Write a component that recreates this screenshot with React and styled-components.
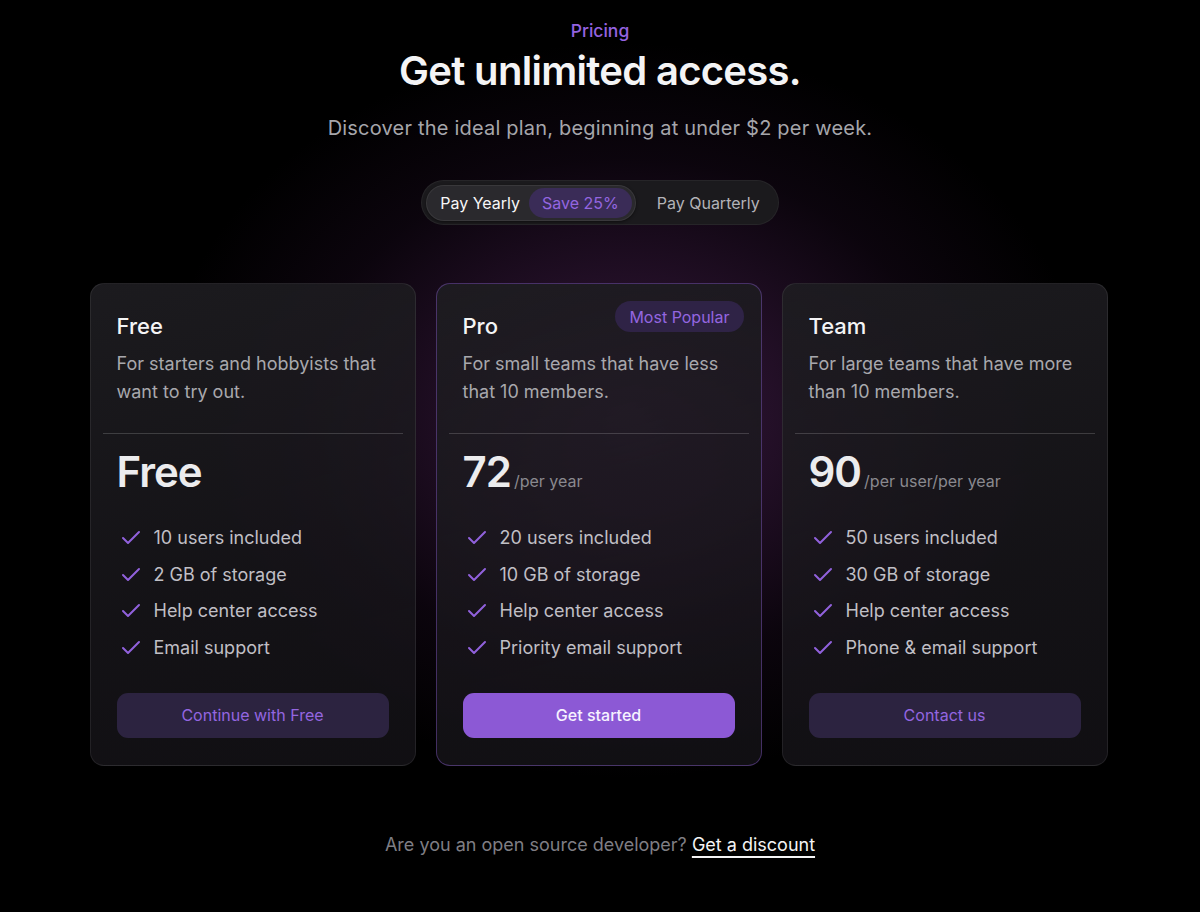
import styled, { createGlobalStyle } from "styled-components";
import { Check } from "lucide-react";

const GlobalStyle = createGlobalStyle`
  html, body {
    margin: 0;
    background: #000;
  }
  body {
    font-family: Inter, "Noto Sans", sans-serif;
    -webkit-font-smoothing: antialiased;
  }
  * {
    box-sizing: border-box;
  }
`;

const Page = styled.div`
  min-height: 912px;
  display: flex;
  flex-direction: column;
  align-items: center;
  padding-top: 19px;
  background: radial-gradient(
      ellipse 580px 460px at 52% 45%,
      rgba(135, 60, 150, 0.42),
      rgba(70, 28, 80, 0.16) 55%,
      transparent 80%
    ),
    #000;
`;

const Eyebrow = styled.div`
  color: #9563e0;
  font-size: 17.5px;
  font-weight: 500;
  line-height: 24px;
`;

const Heading = styled.h1`
  margin: 3px 0 0;
  color: #f4f4f5;
  font-size: 40px;
  font-weight: 600;
  letter-spacing: -0.7px;
  line-height: 50px;
`;

const Lead = styled.p`
  margin: 18px 0 0;
  color: #a6a6ab;
  font-size: 20px;
  letter-spacing: 0.2px;
  line-height: 28px;
`;

const Toggle = styled.div`
  margin-top: 38px;
  display: flex;
  align-items: center;
  height: 45px;
  padding: 4px;
  border-radius: 23px;
  background: #1b1a1d;
  border: 1px solid rgba(255, 255, 255, 0.05);
`;

const ActiveOption = styled.div`
  display: flex;
  align-items: center;
  gap: 9px;
  height: 36px;
  padding: 0 3px 0 13px;
  border-radius: 18px;
  background: #2a292d;
  border: 1px solid rgba(255, 255, 255, 0.07);
  color: #f7f7f8;
  font-size: 16px;
  box-shadow: 0 1px 3px rgba(0, 0, 0, 0.5);
`;

const SaveBadge = styled.span`
  display: flex;
  align-items: center;
  height: 30px;
  padding: 0 13px;
  border-radius: 15px;
  background: #3a2c57;
  color: #9466e0;
  font-size: 16px;
`;

const Option = styled.div`
  padding: 0 14px 0 21px;
  color: #b3b3b8;
  font-size: 16px;
`;

const Grid = styled.div`
  margin-top: 58px;
  margin-right: 3px;
  width: 1018px;
  display: grid;
  grid-template-columns: repeat(3, 1fr);
  gap: 20px;
`;

const Card = styled.div`
  position: relative;
  display: flex;
  flex-direction: column;
  padding: 28px 26px 27px;
  border-radius: 14px;
  border: 1px solid
    ${(p) => (p.$featured ? "rgba(150, 100, 230, 0.38)" : "rgba(255, 255, 255, 0.08)")};
  background: linear-gradient(
    165deg,
    rgba(30, 29, 33, 0.92) 0%,
    rgba(26, 24, 29, 0.76) 60%,
    rgba(22, 20, 25, 0.74) 100%
  );
`;

const Badge = styled.span`
  position: absolute;
  top: 17px;
  right: 17px;
  height: 31px;
  padding: 0 14px;
  display: flex;
  align-items: center;
  border-radius: 16px;
  background: #2f2346;
  color: #9466e0;
  font-size: 16px;
`;

const PlanName = styled.h3`
  margin: 0;
  color: #f4f4f5;
  font-size: 22px;
  font-weight: 500;
  line-height: 28px;
`;

const PlanText = styled.p`
  margin: 10px 0 0;
  color: #a8a8ad;
  font-size: 18px;
  line-height: 28px;
`;

const Divider = styled.hr`
  margin: 27px -14px 0;
  border: none;
  height: 1px;
  background: rgba(255, 255, 255, 0.17);
`;

const PriceRow = styled.div`
  margin-top: 13px;
  display: flex;
  align-items: baseline;
  gap: 3px;
  height: 50px;
`;

const Amount = styled.span`
  color: #ececee;
  font-size: 42px;
  font-weight: 600;
  letter-spacing: -1px;
  line-height: 50px;
`;

const Period = styled.span`
  color: #8a898f;
  font-size: 16px;
`;

const Features = styled.ul`
  list-style: none;
  margin: 27px 0 0;
  padding: 0;
  display: flex;
  flex-direction: column;
  gap: 8.5px;
`;

const Feature = styled.li`
  display: flex;
  align-items: center;
  gap: 11px;
  padding-left: 2px;
  color: #c0bfc5;
  font-size: 18px;
  line-height: 28px;
  svg {
    color: #9161dc;
    flex-shrink: 0;
  }
`;

const ButtonWrap = styled.div`
  margin-top: auto;
  padding-top: 31px;
`;

const Button = styled.button`
  height: 45px;
  width: 100%;
  border: none;
  border-radius: 11px;
  font-family: inherit;
  font-size: 16px;
  font-weight: ${(p) => (p.$primary ? 500 : 400)};
  color: ${(p) => (p.$primary ? "#f6f2ff" : "#9466e0")};
  background: ${(p) => (p.$primary ? "#8c59d5" : "#2c2340")};
  cursor: pointer;
`;

const Footer = styled.p`
  margin: 65px 0 0;
  color: #7f7e84;
  font-size: 18px;
  line-height: 28px;
`;

const Discount = styled.a`
  color: #f4f4f5;
  text-decoration: underline;
  text-decoration-thickness: 1.5px;
  text-underline-offset: 5px;
  cursor: pointer;
`;

const plans = [
  {
    name: "Free",
    text: "For starters and hobbyists that want to try out.",
    amount: "Free",
    features: ["10 users included", "2 GB of storage", "Help center access", "Email support"],
    cta: "Continue with Free",
  },
  {
    name: "Pro",
    text: "For small teams that have less that 10 members.",
    amount: "72",
    period: "/per year",
    featured: true,
    features: ["20 users included", "10 GB of storage", "Help center access", "Priority email support"],
    cta: "Get started",
  },
  {
    name: "Team",
    text: "For large teams that have more than 10 members.",
    amount: "90",
    period: "/per user/per year",
    features: ["50 users included", "30 GB of storage", "Help center access", "Phone & email support"],
    cta: "Contact us",
  },
];

export default function App() {
  return (
    <Page>
      <GlobalStyle />
      <Eyebrow>Pricing</Eyebrow>
      <Heading>Get unlimited access.</Heading>
      <Lead>Discover the ideal plan, beginning at under $2 per week.</Lead>

      <Toggle>
        <ActiveOption>
          Pay Yearly
          <SaveBadge>Save 25%</SaveBadge>
        </ActiveOption>
        <Option>Pay Quarterly</Option>
      </Toggle>

      <Grid>
        {plans.map((plan) => (
          <Card key={plan.name} $featured={plan.featured}>
            {plan.featured && <Badge>Most Popular</Badge>}
            <PlanName>{plan.name}</PlanName>
            <PlanText>{plan.text}</PlanText>
            <Divider />
            <PriceRow>
              <Amount>{plan.amount}</Amount>
              {plan.period && <Period>{plan.period}</Period>}
            </PriceRow>
            <Features>
              {plan.features.map((f) => (
                <Feature key={f}>
                  <Check size={24} strokeWidth={2} />
                  {f}
                </Feature>
              ))}
            </Features>
            <ButtonWrap>
              <Button $primary={plan.featured}>{plan.cta}</Button>
            </ButtonWrap>
          </Card>
        ))}
      </Grid>

      <Footer>
        Are you an open source developer? <Discount>Get a discount</Discount>
      </Footer>
    </Page>
  );
}
